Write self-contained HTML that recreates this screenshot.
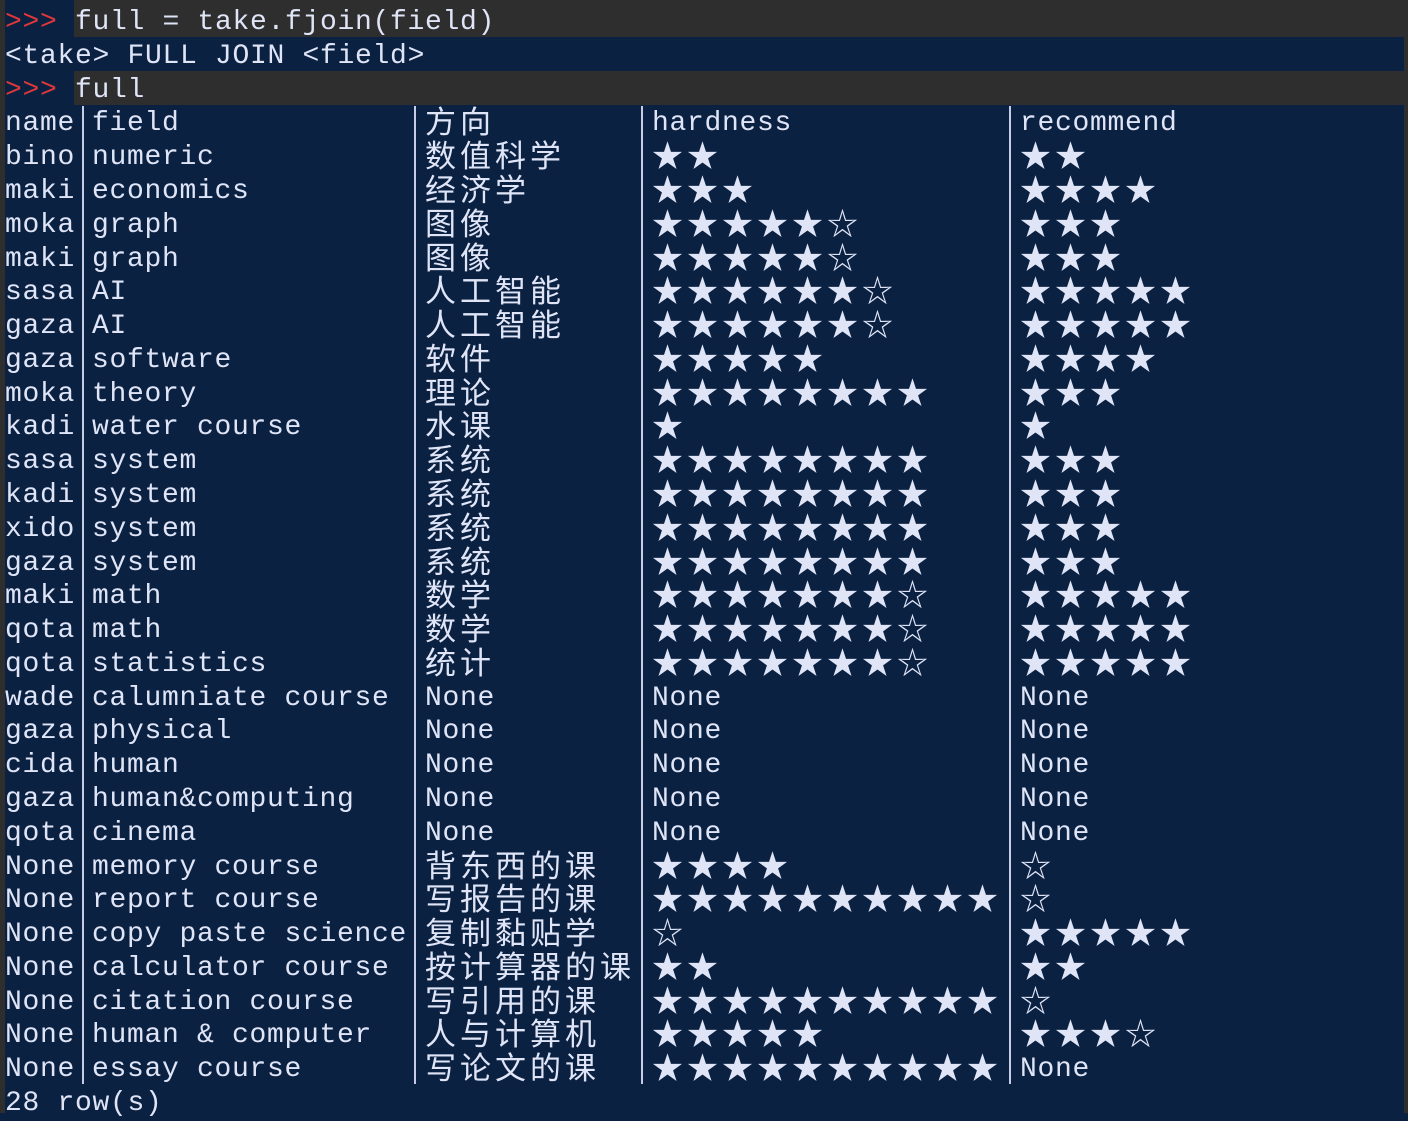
<!DOCTYPE html>
<html><head><meta charset="utf-8"><style>
body{margin:0;width:1408px;height:1113px;background:#0b2142;overflow:hidden;position:relative}
.l{position:absolute;left:0;width:1408px;height:34px;line-height:34px;color:#dfe5f7;white-space:pre}
.l span{position:absolute;top:0}
.l span.m{top:3px}
.l span.c,.l span.s{top:-1px}
.m{font-family:"Liberation Mono",monospace;font-size:28px;letter-spacing:0.7px}
.c{font-family:"Noto Sans CJK SC","Liberation Sans",sans-serif;font-size:31px;letter-spacing:4px}
.s{font-family:"Noto Sans CJK JP","DejaVu Sans",sans-serif;font-size:31px;letter-spacing:4px}
.g{position:absolute;background:#2e2e2e}
.v{position:absolute;top:106px;height:978px;width:2px;background:#c5cde6}
.r{color:#e0383a}
</style></head><body>
<div class="g" style="left:0;top:0;width:5px;height:1113px"></div>
<div class="g" style="left:1404px;top:0;width:4px;height:1113px"></div>
<div class="g" style="left:74px;top:0;width:1330px;height:37px"></div>
<div class="g" style="left:74px;top:71px;width:1330px;height:34px"></div>
<div class="v" style="left:82px"></div>
<div class="v" style="left:414px"></div>
<div class="v" style="left:641px"></div>
<div class="v" style="left:1009px"></div>
<div id="rows"></div>
<div class="l" style="top:3px"><span class="m r" style="left:5px">&gt;&gt;&gt;</span><span class="m" style="left:75px">full = take.fjoin(field)</span></div>
<div class="l" style="top:37px"><span class="m" style="left:5px">&lt;take&gt; FULL JOIN &lt;field&gt;</span></div>
<div class="l" style="top:71px"><span class="m r" style="left:5px">&gt;&gt;&gt;</span><span class="m" style="left:75px">full</span></div>
<script>
var d=[
["name","field","方向","hardness","recommend"],
["bino","numeric","数值科学","★★","★★"],
["maki","economics","经济学","★★★","★★★★"],
["moka","graph","图像","★★★★★☆","★★★"],
["maki","graph","图像","★★★★★☆","★★★"],
["sasa","AI","人工智能","★★★★★★☆","★★★★★"],
["gaza","AI","人工智能","★★★★★★☆","★★★★★"],
["gaza","software","软件","★★★★★","★★★★"],
["moka","theory","理论","★★★★★★★★","★★★"],
["kadi","water course","水课","★","★"],
["sasa","system","系统","★★★★★★★★","★★★"],
["kadi","system","系统","★★★★★★★★","★★★"],
["xido","system","系统","★★★★★★★★","★★★"],
["gaza","system","系统","★★★★★★★★","★★★"],
["maki","math","数学","★★★★★★★☆","★★★★★"],
["qota","math","数学","★★★★★★★☆","★★★★★"],
["qota","statistics","统计","★★★★★★★☆","★★★★★"],
["wade","calumniate course","None","None","None"],
["gaza","physical","None","None","None"],
["cida","human","None","None","None"],
["gaza","human&computing","None","None","None"],
["qota","cinema","None","None","None"],
["None","memory course","背东西的课","★★★★","☆"],
["None","report course","写报告的课","★★★★★★★★★★","☆"],
["None","copy paste science","复制黏贴学","☆","★★★★★"],
["None","calculator course","按计算器的课","★★","★★"],
["None","citation course","写引用的课","★★★★★★★★★★","☆"],
["None","human & computer","人与计算机","★★★★★","★★★☆"],
["None","essay course","写论文的课","★★★★★★★★★★","None"]];
var xs=[5,92,425,652,1020],h="";
function cl(t,i){if(t=="None"||i<2||t=="hardness"||t=="recommend")return"m";return i==2?"c":"s";}
d.forEach(function(r,n){var top=3+(n+3)*33.78;h+='<div class="l" style="top:'+top.toFixed(1)+'px">';
r.forEach(function(t,i){h+='<span class="'+cl(t,i)+'" style="left:'+xs[i]+'px">'+t.replace(/&/g,"&amp;")+'</span>';});h+='</div>';});
h+='<div class="l" style="top:'+(3+32*33.78).toFixed(1)+'px"><span class="m" style="left:5px">28 row(s)</span></div>';
document.getElementById("rows").innerHTML=h;
</script>
</body></html>
